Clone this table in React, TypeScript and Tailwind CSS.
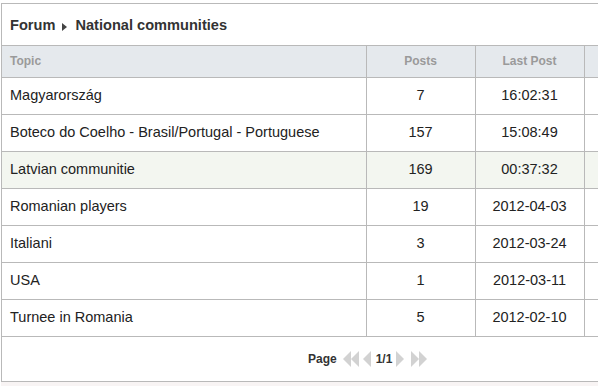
const rows = [
  { topic: 'Magyarország', posts: 7, last: '16:02:31' },
  { topic: 'Boteco do Coelho - Brasil/Portugal - Portuguese', posts: 157, last: '15:08:49' },
  { topic: 'Latvian communitie', posts: 169, last: '00:37:32', hover: true },
  { topic: 'Romanian players', posts: 19, last: '2012-04-03' },
  { topic: 'Italiani', posts: 3, last: '2012-03-24' },
  { topic: 'USA', posts: 1, last: '2012-03-11' },
  { topic: 'Turnee in Romania', posts: 5, last: '2012-02-10' },
];

function Arrow({ dir, double }: { dir: 'left' | 'right'; double?: boolean }) {
  const w = double ? 17 : 9;
  const tri = (x: number) =>
    dir === 'left' ? `M${x + 8} 0 L${x} 8 L${x + 8} 16 Z` : `M${x} 0 L${x + 8} 8 L${x} 16 Z`;
  return (
    <svg width={w} height="16" viewBox={`0 0 ${w} 16`} className="shrink-0">
      <path d={tri(0)} fill="#d2d2d2" />
      {double && <path d={tri(8)} fill="#d2d2d2" />}
    </svg>
  );
}

export default function App() {
  return (
    <div
      className="w-[598px] h-[386px] overflow-hidden bg-white pt-[3px] pl-[1px] flex flex-col"
      style={{ fontFamily: '"Liberation Sans", Arial, sans-serif' }}
    >
      <div className="w-[694px] border border-[#b9b9b9] bg-white">
        {/* Title */}
        <div className="h-[42px] flex items-center px-[8px] pt-[2px] text-[14.6px] font-bold text-[#333] border-b border-[#b9b9b9]">
          <span>Forum</span>
          <svg width="5" height="8" viewBox="0 0 5 8" className="ml-[7px] mr-[8px] mt-[2px]">
            <path d="M0 0 L5 4 L0 8 Z" fill="#444" />
          </svg>
          <span>National communities</span>
        </div>

        {/* Table */}
        <table className="w-full border-collapse table-fixed">
          <colgroup>
            <col className="w-[364px]" />
            <col className="w-[109px]" />
            <col className="w-[109px]" />
            <col />
          </colgroup>
          <thead>
            <tr className="h-[31px] bg-[#e5e9ed] text-[12px] font-bold text-[#9a9a9a]">
              <th className="text-left font-bold pl-[8px] border-b border-[#b9b9b9]">Topic</th>
              <th className="font-bold border-l border-b border-[#b9b9b9]">Posts</th>
              <th className="font-bold border-l border-b border-[#b9b9b9]">Last Post</th>
              <th className="font-bold border-l border-b border-[#b9b9b9]"></th>
            </tr>
          </thead>
          <tbody>
            {rows.map((r) => (
              <tr
                key={r.topic}
                className={`h-[37px] text-[14.5px] text-[#222] ${r.hover ? 'bg-[#f3f6f0]' : 'bg-white'}`}
              >
                <td className="pl-[8px] border-b border-[#b9b9b9] whitespace-nowrap">{r.topic}</td>
                <td className="text-center border-l border-b border-[#b9b9b9]">{r.posts}</td>
                <td className="text-center border-l border-b border-[#b9b9b9]">{r.last}</td>
                <td className="border-l border-b border-[#b9b9b9]"></td>
              </tr>
            ))}
          </tbody>
        </table>

        {/* Pager */}
        <div className="h-[44px] flex items-center pl-[306px] text-[12px] font-bold text-[#333]">
          <span className="mr-[6px]">Page</span>
          <Arrow dir="left" double />
          <span className="w-[3px]" />
          <Arrow dir="left" />
          <span className="mx-[4px]">1/1</span>
          <Arrow dir="right" />
          <span className="w-[6px]" />
          <Arrow dir="right" double />
        </div>
      </div>
      <div className="flex-1 bg-[#f8f4f4]" />
    </div>
  );
}
